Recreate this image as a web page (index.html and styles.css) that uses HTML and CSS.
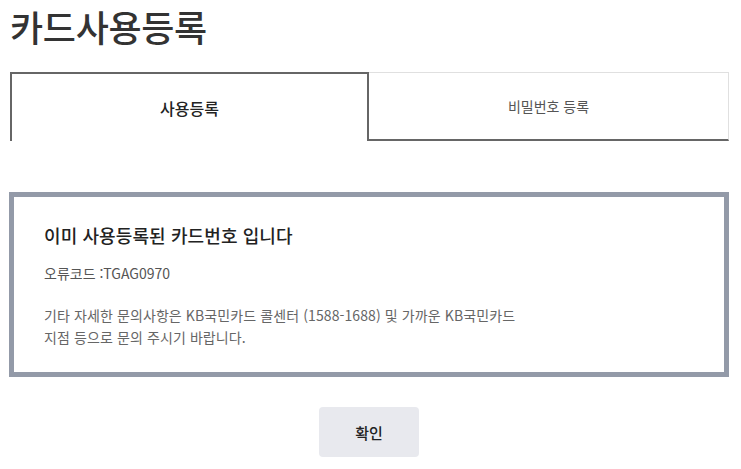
FILE: index.html
```html
<!DOCTYPE html>
<html lang="ko">
<head>
<meta charset="utf-8">
<title>카드사용등록</title>
<link rel="stylesheet" href="styles.css">
</head>
<body>
<div class="page">
  <h1 class="title">카드사용등록</h1>
  <div class="tabs">
    <div class="tab tab-active">사용등록</div>
    <div class="tab tab-inactive">비밀번호 등록</div>
  </div>
  <div class="notice">
    <h2 class="notice-title">이미 사용등록된 카드번호 입니다</h2>
    <p class="notice-code">오류코드 :TGAG0970</p>
    <p class="notice-desc">기타 자세한 문의사항은 KB국민카드 콜센터 (1588-1688) 및 가까운 KB국민카드<br>지점 등으로 문의 주시기 바랍니다.</p>
  </div>
  <div class="actions">
    <button class="btn-confirm" type="button">확인</button>
  </div>
</div>
</body>
</html>
```

FILE: styles.css
```css
html, body {
  margin: 0;
  padding: 0;
  background: #ffffff;
}
body {
  font-family: "Noto Sans CJK KR", "Noto Sans", sans-serif;
  color: #222;
}
.page {
  width: 720px;
  padding-left: 9px;
}
.title {
  margin: 0;
  padding-left: 1px;
  font-size: 36px;
  font-weight: 500;
  line-height: 52px;
  letter-spacing: -0.3px;
  color: #333;
}
.tabs {
  display: flex;
  margin-top: 20px;
  margin-left: 1px;
}
.tab {
  height: 69px;
  box-sizing: border-box;
  display: flex;
  align-items: center;
  justify-content: center;
}
.tab-active {
  width: 359px;
  flex: none;
  border: 2px solid #666;
  border-bottom: none;
  font-size: 16px;
  font-weight: 500;
  color: #222;
}
.tab-inactive {
  flex: 1 1 0;
  border-top: 1px solid #e0e0e0;
  border-right: 1px solid #e0e0e0;
  border-bottom: 2px solid #666;
  font-size: 14px;
  color: #555;
}
.notice {
  margin-top: 51px;
  border: 5px solid #939aa8;
  padding: 25px 30px 24px;
}
.notice-title {
  margin: 0;
  font-size: 18px;
  font-weight: 500;
  line-height: 26px;
  letter-spacing: 0.1px;
  color: #222;
}
.notice-code {
  margin: 15px 0 0;
  font-size: 14px;
  line-height: 21px;
  color: #555;
}
.notice-desc {
  margin: 20px 0 0;
  font-size: 14px;
  line-height: 22px;
  letter-spacing: 0.1px;
  color: #666;
}
.actions {
  display: flex;
  justify-content: center;
  margin-top: 30px;
}
.btn-confirm {
  width: 100px;
  height: 50px;
  border: none;
  border-radius: 4px;
  background: #e8e9ee;
  font-family: inherit;
  font-size: 15px;
  font-weight: 500;
  color: #222;
}
```
